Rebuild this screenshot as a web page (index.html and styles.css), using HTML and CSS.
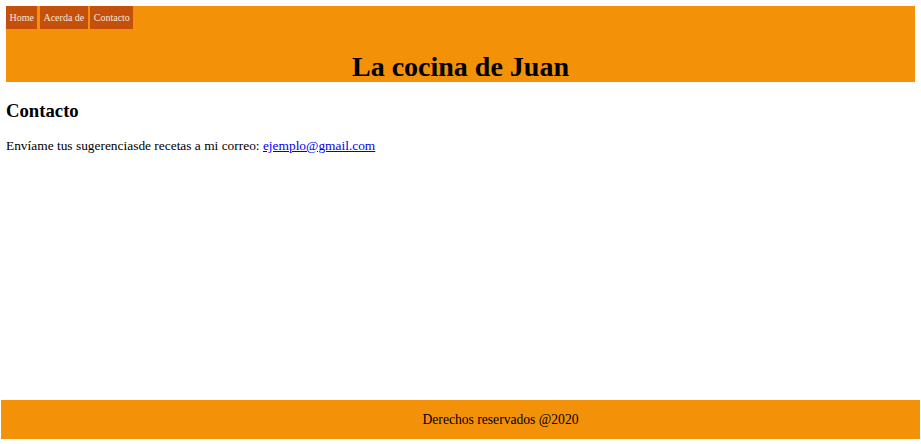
FILE: index.html
```html
<!DOCTYPE html>
<html lang="es">
<head>
<meta charset="utf-8">
<title>La cocina de Juan</title>
<link rel="stylesheet" href="styles.css">
</head>
<body>
<header class="site-header">
  <nav class="nav">
    <a class="nav-link" href="#">Home</a>
    <a class="nav-link" href="#">Acerda de</a>
    <a class="nav-link" href="#">Contacto</a>
  </nav>
  <h1 class="site-title">La cocina de Juan</h1>
</header>
<main class="content">
  <h2 class="section-title">Contacto</h2>
  <p class="text">Envíame tus sugerenciasde recetas a mi correo: <a class="mail" href="#">ejemplo@gmail.com</a></p>
</main>
<footer class="site-footer">Derechos reservados @2020</footer>
</body>
</html>
```

FILE: styles.css
```css
html, body {
  height: 100%;
}
body {
  margin: 0;
  padding: 6px 6px 0 6px;
  box-sizing: border-box;
  font-family: "Liberation Serif", "Times New Roman", serif;
  color: #000;
  background: #fff;
  display: flex;
  flex-direction: column;
}
.site-header {
  background: #f39208;
  height: 76px;
  display: flex;
  flex-direction: column;
}
.nav {
  font-size: 10px;
  line-height: 23px;
  height: 23px;
}
.nav-link {
  display: inline-block;
  background: #c4500b;
  color: #f4e6d8;
  text-decoration: none;
  padding: 0 3.5px;
  height: 23px;
}
.site-title {
  margin: 0;
  font-size: 28px;
  font-weight: bold;
  text-align: center;
  line-height: 30px;
  margin-top: auto;
}
.content {
  flex: 1;
}
.section-title {
  font-size: 18.72px;
  margin: 18px 0 0 0;
}
.text {
  font-size: 13.4px;
  margin: 16px 0 0 0;
}
.mail {
  color: #0000ee;
}
.site-footer {
  margin: 0 -5px 5px -5px;
  background: #f39208;
  height: 39px;
  line-height: 39px;
  text-align: center;
  padding-left: 80px;
  font-size: 13.6px;
}
```
